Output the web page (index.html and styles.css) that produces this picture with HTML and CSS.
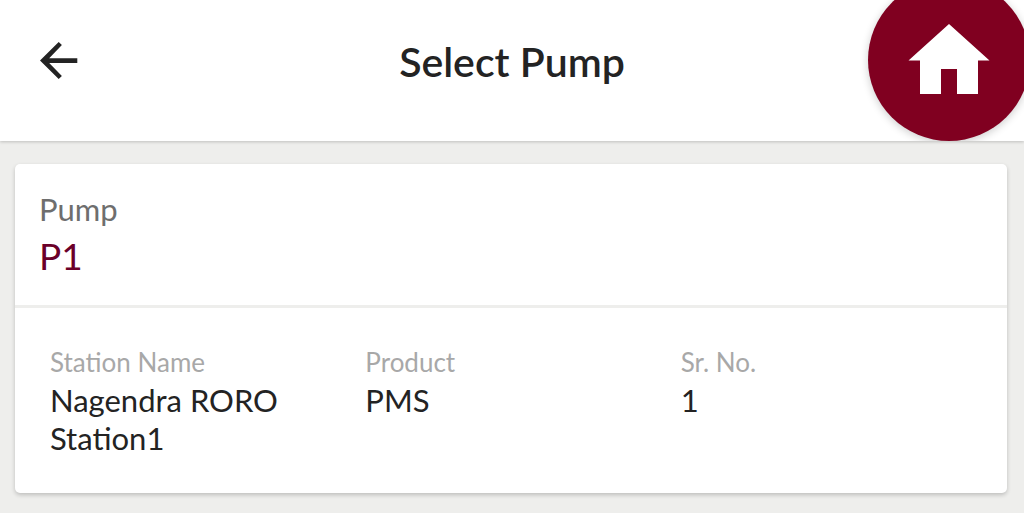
FILE: index.html
```html
<!DOCTYPE html>
<html lang="en">
<head>
    <meta charset="utf-8">
    <meta name="viewport" content="width=device-width, initial-scale=1">
    <title>Select Pump</title>
    <link rel="stylesheet" href="styles.css">
</head>
<body>
    <header class="toolbar">
        <button class="back-button" type="button" aria-label="Back">
            <svg class="back-icon" viewBox="0 0 38 38" aria-hidden="true">
                <path d="M37.300 17.200v4.800H9.200l12.700 12.900-3.200 3.100L0 19.500 18.700 1l3.200 3.100L9.200 17.200z"/>
            </svg>
        </button>
        <h1 class="title">Select Pump</h1>
        <a class="home-button" href="#" aria-label="Home">
            <svg class="home-icon" viewBox="0 0 80 70" aria-hidden="true">
                <path d="M40 0l40.500 36.500H69V70H48V45H32v25H11V36.500H-.5z"/>
            </svg>
        </a>
    </header>
    <main class="content">
        <section class="pump-card">
            <div class="pump-header">
                <div class="pump-label">Pump</div>
                <div class="pump-name">P1</div>
            </div>
            <dl class="pump-details">
                <div class="detail">
                    <dt>Station Name</dt>
                    <dd>Nagendra RORO Station1</dd>
                </div>
                <div class="detail">
                    <dt>Product</dt>
                    <dd>PMS</dd>
                </div>
                <div class="detail">
                    <dt>Sr. No.</dt>
                    <dd>1</dd>
                </div>
            </dl>
        </section>
    </main>
</body>
</html>
```
FILE: styles.css
```css
* {
    box-sizing: border-box;
}
body {
    margin: 0;
    background-color: #eeeeec;
    color: #232323;
    font-family: Lato, sans-serif;
    overflow-x: hidden;
}
.toolbar {
    display: grid;
    grid-template-columns: 160px 1fr 160px;
    grid-template-rows: 100%;
    align-items: center;
    height: 141px;
    background-color: #ffffff;
    box-shadow: 0 1px 3px rgba(0, 0, 0, 0.2);
    overflow: hidden;
}
.back-button {
    width: 78px;
    height: 78px;
    margin: 0 0 22px 20px;
    padding: 20px;
    border: none;
    background: none;
    cursor: pointer;
}
.back-icon {
    display: block;
    width: 38px;
    height: 38px;
    fill: #232323;
}
.title {
    margin: 0 0 18px;
    font-size: 41px;
    font-weight: 600;
    line-height: 48px;
    text-align: center;
}
.home-button {
    display: flex;
    align-items: center;
    justify-content: center;
    align-self: end;
    width: 162px;
    height: 162px;
    margin-left: 4px;
    padding-bottom: 2px;
    border-radius: 50%;
    background-color: #800020;
    box-shadow: 0 2px 8px rgba(0, 0, 0, 0.2);
}
.home-icon {
    width: 80px;
    height: 70px;
    fill: #ffffff;
    overflow: visible;
}
.content {
    padding: 23px 17px 20px 15px;
}
.pump-card {
    border-radius: 5px;
    background-color: #ffffff;
    box-shadow: 0 2px 4px rgba(0, 0, 0, 0.2);
}
.pump-header {
    padding: 24px 24px 23px;
    border-bottom: 3px solid #eeeeec;
}
.pump-label {
    color: #6e6e6e;
    font-size: 31px;
    line-height: 42px;
}
.pump-name {
    color: #6b0029;
    font-size: 37px;
    line-height: 52px;
}
.pump-details {
    display: grid;
    grid-template-columns: repeat(3, 1fr);
    margin: 0;
    padding: 35px 23px 36px;
}
.detail {
    padding: 0 12px;
}
.detail dt {
    color: #a8a8a8;
    font-size: 26px;
    line-height: 38px;
}
.detail dd {
    margin: 0;
    font-size: 31px;
    line-height: 38px;
}
```
